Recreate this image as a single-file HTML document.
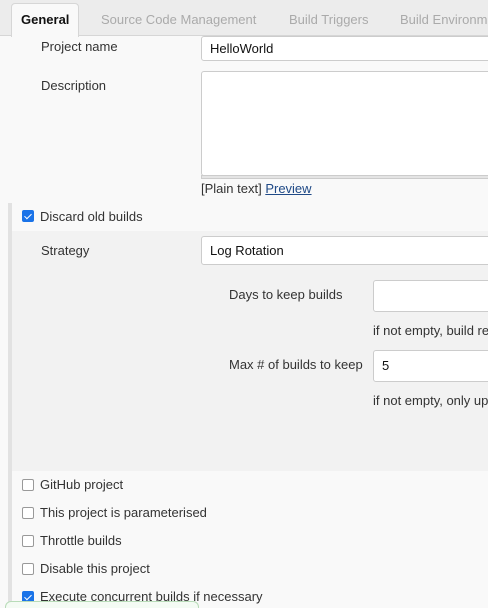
<html style="overflow:hidden;height:608px"><head><style>
body{margin:0;width:488px;height:608px;overflow:hidden;background:#f9f9f9;font-family:"Liberation Sans",sans-serif;font-size:13px;color:#333;position:relative}
.a{position:absolute;white-space:nowrap}
.in{position:absolute;background:#fff;border:1px solid #ccc;border-radius:3px;box-sizing:border-box;padding-left:8px}
.cb{position:absolute;left:22px;width:10px;height:10px;border:1px solid #999;border-radius:2px;background:#fff}
.ck{background:#1a73e8;border-color:#1a73e8}
.ck:after{content:"";position:absolute;left:3px;top:0.5px;width:3px;height:6px;border:solid #fff;border-width:0 1.5px 1.5px 0;transform:rotate(45deg)}
</style></head><body>
<div class="a" style="left:0;top:0;width:488px;height:36px;background:#ececec;border-bottom:1px solid #d6d6d6;box-sizing:border-box"></div>
<div class="a" style="left:11px;top:3px;width:68px;height:34px;background:#f9f9f9;border:1px solid #d6d6d6;border-bottom:none;border-radius:4px 4px 0 0;box-sizing:border-box"></div>
<div class="a" style="left:21px;top:12px;font-weight:bold;color:#111">General</div>
<div class="a" style="left:101px;top:12px;color:#aaa">Source Code Management</div>
<div class="a" style="left:289px;top:12px;color:#aaa">Build Triggers</div>
<div class="a" style="left:400px;top:12px;color:#aaa">Build Environm</div>
<div class="a" style="left:41px;top:39px">Project name</div>
<div class="in" style="left:201px;top:36px;width:300px;height:25px;line-height:23px;color:#111">HelloWorld</div>
<div class="a" style="left:41px;top:78px">Description</div>
<div class="in" style="left:201px;top:71px;width:300px;height:105px"></div>
<div class="a" style="left:201px;top:175px;width:300px;height:4px;background:#e4e4e4;border:1px solid #ccc;box-sizing:border-box"></div>
<div class="a" style="left:201px;top:181px">[Plain text] <span style="color:#204a87;text-decoration:underline">Preview</span></div>
<div class="a" style="left:8px;top:203px;width:4px;height:405px;background:#e2e2e2"></div>
<div class="cb ck" style="top:210px"></div>
<div class="a" style="left:40px;top:209px">Discard old builds</div>
<div class="a" style="left:12px;top:231px;width:476px;height:240px;background:#f2f2f2"></div>
<div class="a" style="left:41px;top:243px">Strategy</div>
<div class="in" style="left:201px;top:236px;width:300px;height:29px;line-height:27px;color:#111">Log Rotation</div>
<div class="a" style="left:229px;top:287px">Days to keep builds</div>
<div class="in" style="left:373px;top:280px;width:130px;height:32px"></div>
<div class="a" style="left:373px;top:323px">if not empty, build re</div>
<div class="a" style="left:229px;top:357px">Max # of builds to keep</div>
<div class="in" style="left:373px;top:350px;width:130px;height:32px;line-height:30px;color:#111">5</div>
<div class="a" style="left:373px;top:393px">if not empty, only up</div>
<div class="cb" style="top:479px"></div><div class="a" style="left:40px;top:477px">GitHub project</div>
<div class="cb" style="top:507px"></div><div class="a" style="left:40px;top:505px">This project is parameterised</div>
<div class="cb" style="top:535px"></div><div class="a" style="left:40px;top:533px">Throttle builds</div>
<div class="cb" style="top:563px"></div><div class="a" style="left:40px;top:561px">Disable this project</div>
<div class="cb ck" style="top:591px"></div><div class="a" style="left:40px;top:589px">Execute concurrent builds if necessary</div>
<div class="a" style="left:5px;top:601px;width:194px;height:7px;border:1px solid #b8dcb8;border-bottom:none;border-radius:6px 6px 0 0;background:#f4fbf4;box-sizing:border-box"></div>
</body></html>
